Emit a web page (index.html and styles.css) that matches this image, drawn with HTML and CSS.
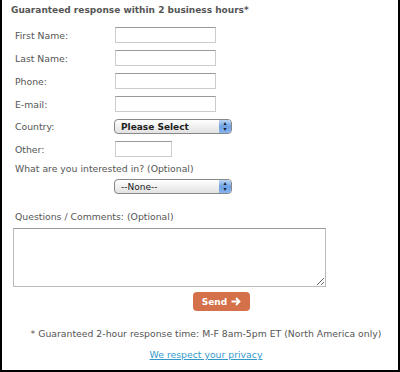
FILE: index.html
```html
<!DOCTYPE html>
<html lang="en">
<head>
    <meta charset="UTF-8">
    <title>Contact Form</title>
    <link rel="stylesheet" href="styles.css">
</head>
<body>
    <div class="frame">
        <h2 class="heading">Guaranteed response within 2 business hours*</h2>

        <form class="contact-form">
            <div class="fields">
                <label>First Name:</label>
                <input type="text" class="text-input">
                <label>Last Name:</label>
                <input type="text" class="text-input">
                <label>Phone:</label>
                <input type="text" class="text-input">
                <label>E-mail:</label>
                <input type="text" class="text-input">
                <label>Country:</label>
                <span class="select-wrap">
                    <select class="aqua-select bold">
                        <option>Please Select</option>
                    </select>
                </span>
                <label>Other:</label>
                <input type="text" class="text-input short">
            </div>

            <div class="wide-label">What are you interested in? (Optional)</div>
            <div class="indent">
                <span class="select-wrap">
                    <select class="aqua-select">
                        <option>--None--</option>
                    </select>
                </span>
            </div>

            <div class="wide-label comments-label">Questions / Comments: (Optional)</div>
            <textarea class="comments"></textarea>

            <div class="actions">
                <button type="button" class="send-btn">Send
                    <svg width="10" height="9" viewBox="0 0 10 9"><path d="M0.5 4.5H8.5M5 1L8.5 4.5L5 8" fill="none" stroke="#fff" stroke-width="1.8"/></svg>
                </button>
            </div>
        </form>

        <div class="footer">
            <p class="note">* Guaranteed 2-hour response time: M-F 8am-5pm ET (North America only)</p>
            <p class="privacy"><a href="#">We respect your privacy</a></p>
        </div>
    </div>
</body>
</html>
```

FILE: styles.css
```css
body {
    margin: 0;
    background: #fff;
    font-family: "DejaVu Sans", Verdana, sans-serif;
    font-size: 9.3px;
    color: #555;
}
.frame {
    width: 400px;
    height: 372px;
    box-sizing: border-box;
    border: 2px solid #000;
    border-top: none;
    padding: 4px 0 0 0;
}
.heading {
    margin: 0 0 0 9px;
    font-size: 9px;
    font-weight: bold;
    color: #555;
    line-height: 12px;
}
.contact-form {
    padding-left: 12px;
}
.fields {
    display: grid;
    grid-template-columns: 101px auto;
    row-gap: 7px;
    align-items: center;
    justify-items: start;
    margin-top: 11px;
}
.fields label {
    padding-left: 1px;
}
.text-input {
    width: 101px;
    height: 16px;
    box-sizing: border-box;
    border: 1px solid #ccc;
    border-top-color: #999;
    margin: 0;
    padding: 0 2px;
}
.text-input.short {
    width: 57px;
}
.select-wrap {
    position: relative;
    display: inline-block;
    margin-left: -1px;
}
.select-wrap::after {
    content: "";
    position: absolute;
    top: 1px;
    right: 1px;
    width: 12px;
    height: 13px;
    border-radius: 0 3px 3px 0;
    background: linear-gradient(#bcd6f4, #6fa2e4 50%, #86b4ec);
    pointer-events: none;
}
.select-wrap::before {
    content: "\25B4\A\25BE";
    white-space: pre;
    position: absolute;
    top: 1px;
    right: 1px;
    width: 12px;
    z-index: 1;
    font-size: 6px;
    line-height: 6px;
    text-align: center;
    color: #123;
    pointer-events: none;
}
.aqua-select {
    appearance: none;
    -webkit-appearance: none;
    width: 118px;
    height: 15px;
    margin: 0;
    padding: 0 0 0 6px;
    border: 1px solid #888;
    border-radius: 4px;
    background: linear-gradient(#fff, #f0f0f0 50%, #e2e2e2);
    font-family: inherit;
    font-size: 9px;
    color: #222;
}
.aqua-select.bold {
    font-weight: bold;
}
.wide-label {
    margin-top: 6px;
    padding-left: 1px;
    line-height: 12px;
}
.indent {
    margin: 4px 0 0 101px;
}
.comments-label {
    margin-top: 17px;
}
.comments {
    display: block;
    width: 313px;
    height: 59px;
    box-sizing: border-box;
    margin: 5px 0 0 -1px;
    border: 1px solid #bbb;
    border-top-color: #999;
    resize: both;
}
.actions {
    padding-left: 179px;
    margin-top: 5px;
}
.send-btn {
    display: flex;
    align-items: center;
    gap: 4px;
    height: 19px;
    width: 57px;
    justify-content: center;
    border: none;
    border-radius: 4px;
    background: #d4704a;
    color: #fff;
    font-family: inherit;
    font-size: 9px;
    font-weight: bold;
    padding: 0;
}
.footer {
    padding-left: 12px;
    text-align: center;
    line-height: 12px;
}
.note {
    margin: 17px 0 0 0;
}
.privacy {
    margin: 9px 0 0 0;
}
.privacy a {
    color: #3399cc;
}
```
